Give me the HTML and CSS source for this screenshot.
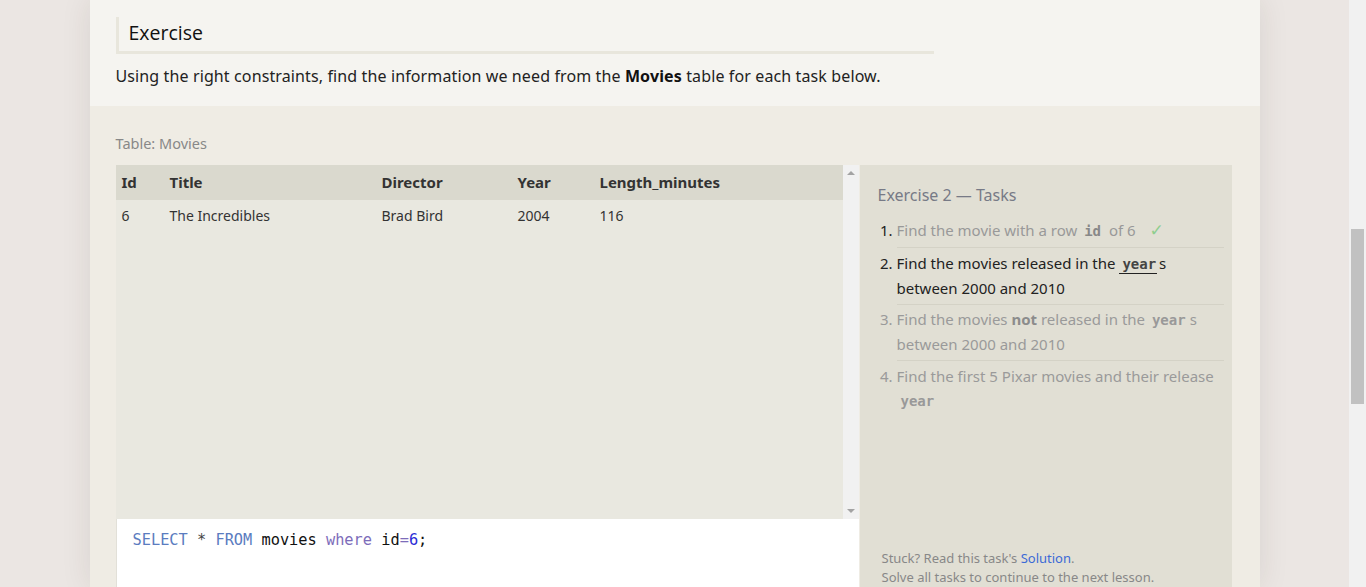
FILE: index.html
```html
<!DOCTYPE html>
<html>
<head>
<meta charset="utf-8">
<link rel="stylesheet" href="styles.css">
</head>
<body>
<div class="viewport">
  <div class="card">
    <section class="intro">
      <h2 class="heading">Exercise</h2>
      <p class="desc">Using the right constraints, find the information we need from the <strong>Movies</strong> table for each task below.</p>
    </section>
    <section class="exercise">
      <div class="table-label">Table: Movies</div>
      <div class="workspace">
        <div class="left">
          <div class="table-wrap">
            <div class="table-scroll">
              <table class="movies">
                <thead>
                  <tr><th class="c-id">Id</th><th class="c-title">Title</th><th class="c-dir">Director</th><th class="c-year">Year</th><th>Length_minutes</th></tr>
                </thead>
                <tbody>
                  <tr><td>6</td><td>The Incredibles</td><td>Brad Bird</td><td>2004</td><td>116</td></tr>
                </tbody>
              </table>
            </div>
            <div class="vscroll">
              <span class="arrow up"></span>
              <span class="arrow down"></span>
            </div>
          </div>
          <div class="editor"><code><span class="kw">SELECT</span> <span class="op">*</span> <span class="kw">FROM</span> movies <span class="kw2">where</span> id<span class="kw2">=</span><span class="num">6</span>;</code></div>
        </div>
        <aside class="tasks">
          <div class="tasks-title">Exercise 2 — Tasks</div>
          <ol class="task-list">
            <li class="done"><span class="n">1.</span><span class="t">Find the movie with a row <code>id</code> of 6 <span class="check">✓</span></span></li>
            <li class="active"><span class="n">2.</span><span class="t">Find the movies released in the <code class="u">year</code>s between 2000 and 2010</span></li>
            <li class="todo"><span class="n">3.</span><span class="t">Find the movies <b>not</b> released in the <code class="gap">year</code>s between 2000 and 2010</span></li>
            <li class="todo last"><span class="n">4.</span><span class="t">Find the first 5 Pixar movies and their release <code class="wrap">year</code></span></li>
          </ol>
          <div class="stuck">
            <div>Stuck? Read this task's <a href="#">Solution</a>.</div>
            <div>Solve all tasks to continue to the next lesson.</div>
          </div>
        </aside>
      </div>
    </section>
  </div>
</div>
<div class="page-scroll"><div class="thumb"></div></div>
</body>
</html>
```

FILE: styles.css
```css
html, body {
  margin: 0;
  height: 587px;
  overflow: hidden;
}
body {
  display: flex;
  font-family: "Noto Sans", "Open Sans", sans-serif;
  color: #222;
}
.viewport {
  flex: 1;
  background: #ebe6e3;
  display: flex;
  justify-content: center;
  overflow: hidden;
}
.card {
  width: 1170px;
  flex-shrink: 0;
  box-shadow: 0 0 28px rgba(60, 40, 30, 0.10);
  display: flex;
  flex-direction: column;
}
.intro {
  flex-shrink: 0;
  background: #f5f4f0;
  height: 106px;
  box-sizing: border-box;
  padding: 17px 26px 0;
}
.heading {
  margin: 0;
  width: 805px;
  border-left: 3px solid #e8e6dc;
  border-bottom: 3px solid #e8e6dc;
  padding: 3px 0 5px 10px;
  font-family: "Open Sans", sans-serif;
  font-weight: 400;
  font-size: 19.5px;
  line-height: 26px;
  color: #111;
}
.desc {
  margin: 11px 0 0;
  font-size: 16px;
  letter-spacing: 0.12px;
  line-height: 22px;
  color: #222;
}
.desc strong { font-weight: 700; color: #111; }
.exercise {
  flex-shrink: 0;
  background: #efece4;
  padding: 27px 28px 0 26px;
}
.table-label {
  font-size: 14.5px;
  line-height: 20px;
  color: #888;
  margin-bottom: 12px;
}
.workspace {
  display: grid;
  grid-template-columns: 743px 372px;
  column-gap: 1px;
  height: 430px;
}
.left {
  display: flex;
  flex-direction: column;
}
.table-wrap {
  display: flex;
  height: 354px;
  flex-shrink: 0;
  background: #e9e8e0;
}
.table-scroll {
  flex: 1;
}
.movies {
  width: 100%;
  border-collapse: collapse;
  font-size: 14px;
  color: #333;
}
.movies th {
  background: #dad9ce;
  text-align: left;
  font-weight: 700;
  font-size: 15px;
  height: 34px;
  padding: 0 0 1px 6px;
  color: #333;
}
.movies td {
  padding: 6px 0 0 6px;
  height: 24px;
  vertical-align: top;
}
.c-id { width: 42px; }
.c-title { width: 206px; }
.c-dir { width: 130px; }
.c-year { width: 76px; }
.vscroll {
  width: 16px;
  background: #f1f1f1;
  display: flex;
  flex-direction: column;
  justify-content: space-between;
  align-items: center;
  padding: 6px 0;
  box-sizing: border-box;
}
.arrow {
  width: 0;
  height: 0;
  border-left: 4px solid transparent;
  border-right: 4px solid transparent;
}
.arrow.up { border-bottom: 4px solid #a3a3a3; }
.arrow.down { border-top: 4px solid #a3a3a3; }
.editor {
  flex: 1;
  background: #fff;
  border-left: 1px solid #e2e0d8;
  padding: 9px 16px;
}
.editor code {
  font-family: "DejaVu Sans Mono", monospace;
  font-size: 15.3px;
  line-height: 20px;
  color: #111;
}
.kw { color: #5b7cc0; }
.kw2 { color: #7d6cba; }
.op { color: #444; }
.num { color: #2b2bd6; }
.tasks {
  background: #e1dfd4;
  padding: 19px 8px 0 18px;
  display: flex;
  flex-direction: column;
}
.tasks-title {
  font-size: 16px;
  line-height: 22px;
  color: #777a86;
  margin-bottom: 12px;
}
.task-list {
  list-style: none;
  margin: 0;
  padding: 0;
  font-size: 15px;
  line-height: 24px;
}
.task-list li {
  display: flex;
  margin-bottom: 3px;
}
.task-list li.active { margin-bottom: 2px; }
.task-list .n {
  width: 19px;
  flex-shrink: 0;
  text-align: right;
  margin-left: -4px;
  margin-right: 4px;
}
.task-list .t {
  flex: 1;
  border-bottom: 1px solid #d4d2c6;
  padding-bottom: 4px;
}
.task-list li.last .t { border-bottom: none; }
.task-list li.done .n { color: #222; }
.task-list li.done .t { color: #999; }
.task-list li.active { color: #222; }
.task-list li.todo { color: #9a9a9a; }
.task-list code {
  font-family: "DejaVu Sans Mono", monospace;
  font-weight: 700;
  font-size: 14px;
  margin: 0 0 0 3px;
}
.task-list li.done code { margin-right: 4px; }
.task-list code.wrap { margin-left: 4px; }
.task-list code.gap { margin-right: 4px; }
.task-list li.done code { color: #888; }
.task-list li.active code { color: #444; }
.task-list li.todo code { color: #999; }
.task-list code.u {
  border-bottom: 1px solid #222;
  padding: 0 1px 1px 3px;
  margin-left: 0;
  margin-right: 2px;
}
.task-list b { font-weight: 700; color: #8c8c8c; }
.check {
  color: #8fce8f;
  font-family: "DejaVu Sans", sans-serif;
  font-size: 17px;
  margin-left: 10px;
}
.stuck {
  margin-top: auto;
  padding-left: 4px;
  font-size: 13px;
  line-height: 19px;
  color: #888;
  margin-bottom: 8px;
}
.stuck a { color: #3b6ad6; text-decoration: none; }
.page-scroll {
  width: 17px;
  background: #f1f1f1;
  display: flex;
  flex-direction: column;
  padding: 229px 2px 0;
  box-sizing: border-box;
}
.thumb {
  height: 175px;
  background: #c1c1c1;
}
```
